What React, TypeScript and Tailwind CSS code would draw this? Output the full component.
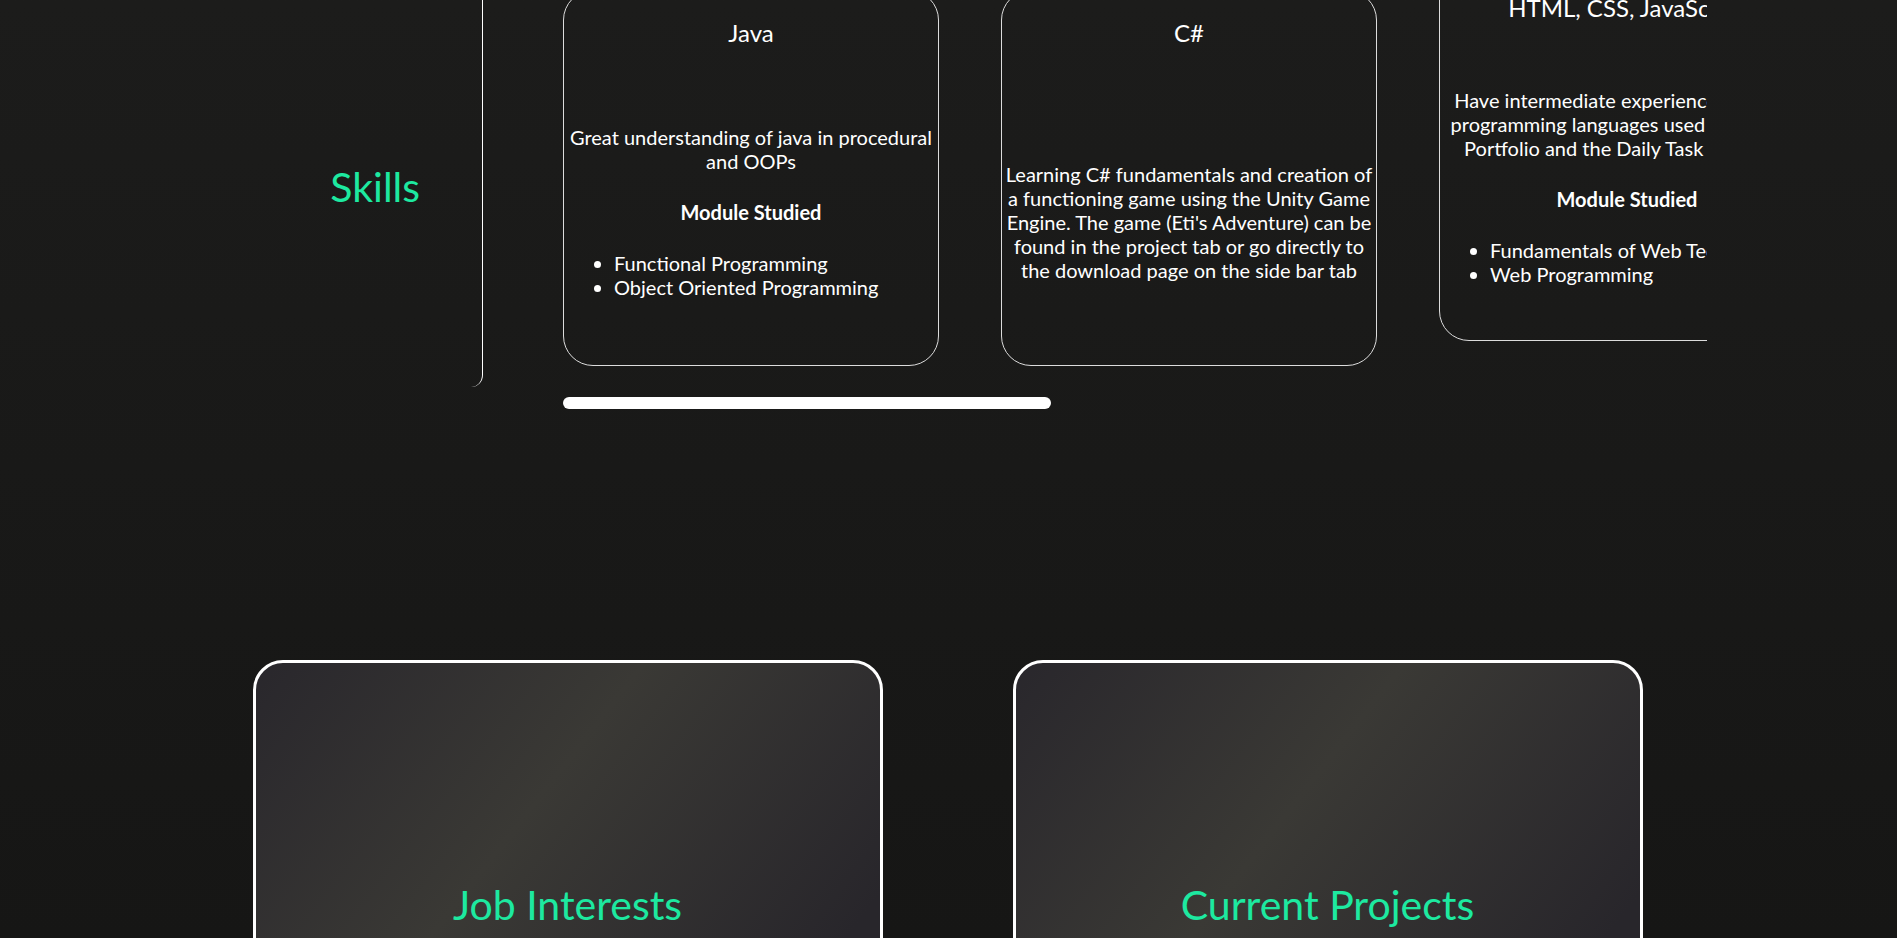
import React from "react";

type Skill = {
  title: string;
  desc: string;
  modules?: string[];
  offset?: string;
  contentShift?: string;
};

const skills: Skill[] = [
  {
    title: "Java",
    desc: "Great understanding of java in procedural and OOPs",
    modules: ["Functional Programming", "Object Oriented Programming"],
    offset: "mt-0",
    contentShift: "pt-[10px]",
  },
  {
    title: "C#",
    desc: "Learning C# fundamentals and creation of a functioning game using the Unity Game Engine. The game (Eti's Adventure) can be found in the project tab or go directly to the download page on the side bar tab",
    offset: "mt-0",
    contentShift: "pt-[30px]",
  },
  {
    title: "HTML, CSS, JavaScript",
    desc: "Have intermediate experiences in these programming languages used to create a Portfolio and the Daily Task Web App",
    modules: ["Fundamentals of Web Technologies", "Web Programming"],
    offset: "-mt-[25px]",
    contentShift: "pt-[10px]",
  },
  {
    title: "Python",
    desc: "Basic understanding of python scripting and data handling",
    modules: ["Introduction to Programming"],
    offset: "mt-0",
    contentShift: "pt-[10px]",
  },
  {
    title: "SQL",
    desc: "Designing and querying relational databases",
    modules: ["Databases"],
    offset: "mt-0",
    contentShift: "pt-[10px]",
  },
];

function SkillCard({ s }: { s: Skill }) {
  return (
    <div
      className={`shrink-0 w-[376px] h-[376px] border border-[#dcdcdc] rounded-[30px] flex flex-col text-white text-center ${s.offset}`}
    >
      <h3 className="pt-[27px] text-[24px] leading-[30px] font-normal">{s.title}</h3>
      <div className={`flex-1 flex flex-col justify-center ${s.contentShift}`}>
        <p className="text-[20px] leading-[24px]">{s.desc}</p>
        {s.modules && (
          <>
            <h4 className="mt-[27px] text-[20px] leading-[24px] font-bold">Module Studied</h4>
            <ul className="mt-[27px] list-disc pl-[50px] text-left text-[20px] leading-[24px]">
              {s.modules.map((m) => (
                <li key={m}>{m}</li>
              ))}
            </ul>
          </>
        )}
      </div>
    </div>
  );
}

function BigCard({ title }: { title: string }) {
  return (
    <div className="w-[630px] h-[420px] shrink-0 border-[3px] border-white rounded-[30px] bg-[linear-gradient(128deg,#29272c_0%,#3a3935_41%,#28262b_85%)] flex flex-col items-center pt-[217px]">
      <h2 className="text-[41px] leading-[49px] text-[#1de9a0] font-normal">{title}</h2>
    </div>
  );
}

export default function App() {
  return (
    <div
      className="h-[938px] w-full overflow-hidden bg-linear-to-b from-[#1c1c1b] to-[#161615]"
      style={{ fontFamily: "Lato, 'Open Sans', sans-serif" }}
    >
      <section className="-mt-[10px] flex items-start">
        <div className="w-[483px] h-[397px] shrink-0 border-r border-white rounded-br-[12px] flex items-center justify-end pr-[62px] pb-[4px]">
          <h2 className="text-[41px] leading-[49px] text-[#1de9a0] font-normal">Skills</h2>
        </div>
        <div className="ml-[80px] w-[1144px] shrink-0">
          <div className="overflow-hidden">
            <div className="flex items-start gap-[62px]">
              {skills.map((s) => (
                <SkillCard key={s.title} s={s} />
              ))}
            </div>
          </div>
          <div className="mt-[31px] w-[488px] h-[12px] rounded-full bg-white" />
        </div>
      </section>
      <section className="mt-[251px] flex justify-center gap-[130px] pr-[2px]">
        <BigCard title="Job Interests" />
        <BigCard title="Current Projects" />
      </section>
    </div>
  );
}
